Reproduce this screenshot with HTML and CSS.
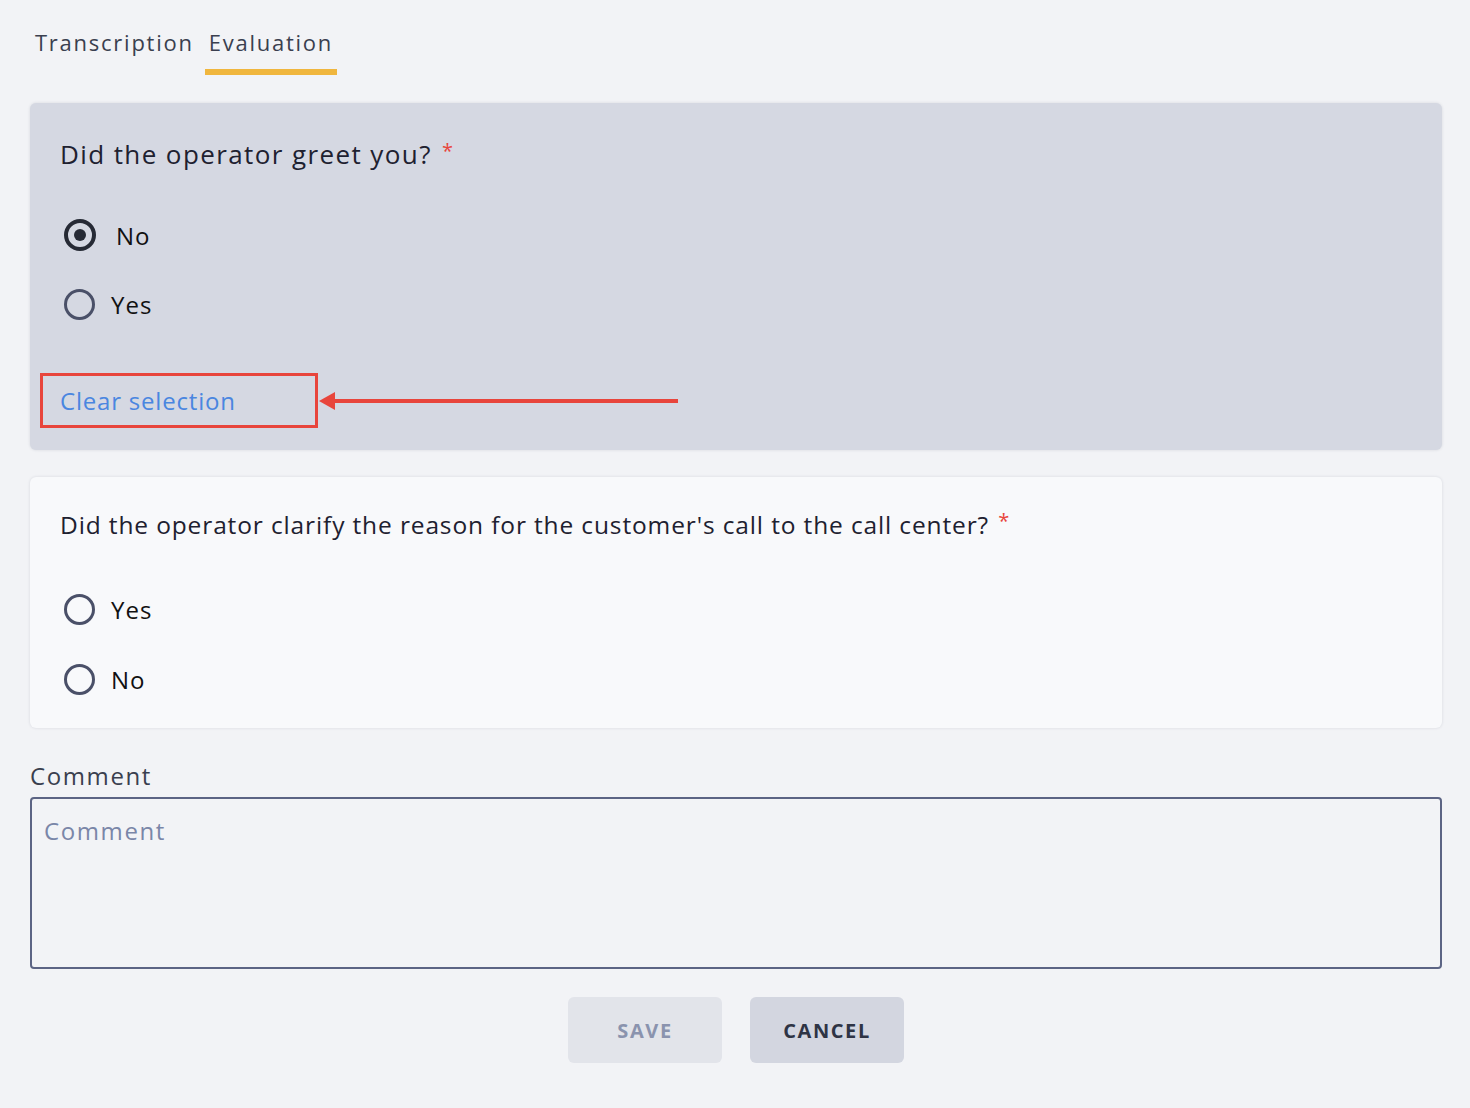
FILE: index.html
```html
<!DOCTYPE html>
<html lang="en">
<head>
    <meta charset="UTF-8">
    <title>Evaluation</title>
    <link rel="stylesheet" href="styles.css">
</head>
<body>
    <div class="page">
        <div class="tabs">
            <div class="tab">Transcription</div>
            <div class="tab active">Evaluation</div>
        </div>

        <div class="card selected">
            <div class="question big">Did the operator greet you? <span class="req">*</span></div>
            <div class="options">
                <label class="option"><span class="radio checked"></span><span class="opt-label gap-wide">No</span></label>
                <label class="option"><span class="radio"></span><span class="opt-label">Yes</span></label>
            </div>
            <div class="clear-row">
                <div class="highlight"><span class="clear-link">Clear selection</span></div>
                <div class="arrow">
                    <svg width="362" height="22" viewBox="0 0 362 22">
                        <path d="M1 11 L17 2 L17 20 Z" fill="#e8453c"/>
                        <line x1="14" y1="11" x2="360" y2="11" stroke="#e8453c" stroke-width="4"/>
                    </svg>
                </div>
            </div>
        </div>

        <div class="card plain">
            <div class="question">Did the operator clarify the reason for the customer's call to the call center? <span class="req">*</span></div>
            <div class="options">
                <label class="option"><span class="radio"></span><span class="opt-label">Yes</span></label>
                <label class="option"><span class="radio"></span><span class="opt-label">No</span></label>
            </div>
        </div>

        <div class="comment">
            <div class="comment-title">Comment</div>
            <div class="textarea">Comment</div>
        </div>

        <div class="actions">
            <button class="btn save">SAVE</button>
            <button class="btn cancel">CANCEL</button>
        </div>
    </div>
</body>
</html>
```

FILE: styles.css
```css
body {
    margin: 0;
    font-family: "Open Sans", Arial, sans-serif;
    background-color: #f2f3f6;
    color: #1e2130;
}
.page {
    padding: 0 28px 0 30px;
}
.tabs {
    display: flex;
    gap: 7px;
    padding-top: 27px;
    margin-left: 1px;
}
.tab {
    font-size: 22px;
    line-height: 30px;
    letter-spacing: 1.75px;
    color: #3a3f4f;
    padding: 0 4px 12px;
    border-bottom: 6px solid transparent;
}
.tab.active {
    border-bottom-color: #f0b63e;
}
.card {
    background-color: #f8f9fb;
    border-radius: 6px;
    box-shadow: 0 0 3px rgba(40, 50, 80, 0.14);
    padding: 0 30px;
}
.card.selected {
    margin-top: 28px;
    background-color: #d5d8e2;
    padding-top: 28px;
    padding-bottom: 22px;
}
.card.plain {
    margin-top: 27px;
    padding-top: 24px;
    padding-bottom: 32px;
}
.question {
    font-size: 24.5px;
    line-height: 40px;
    letter-spacing: 0.87px;
    color: #1e2130;
}
.question.big {
    font-size: 26px;
    letter-spacing: 1.4px;
}
.req {
    color: #e8453c;
    font-size: 20px;
    vertical-align: 6px;
    margin-left: 2px;
}
.options {
    display: flex;
    flex-direction: column;
    gap: 35px;
    margin-top: 44px;
    padding-left: 4px;
}
.card.plain .options {
    margin-top: 47px;
    gap: 36px;
}
.option {
    display: flex;
    align-items: center;
    height: 34px;
}
.radio {
    width: 31px;
    height: 31px;
    border: 3px solid #4a5068;
    border-radius: 50%;
    box-sizing: border-box;
    margin-right: 16px;
    position: relative;
    flex-shrink: 0;
}
.radio.checked {
    width: 32px;
    height: 32px;
    border: 4px solid #262a35;
}
.radio.checked::after {
    content: "";
    position: absolute;
    left: 6px;
    top: 6px;
    width: 12px;
    height: 12px;
    border-radius: 50%;
    background-color: #262a35;
}
.opt-label {
    font-size: 24px;
    letter-spacing: 1px;
    color: #111;
}
.opt-label.gap-wide {
    margin-left: 4px;
}
.clear-row {
    display: flex;
    align-items: center;
    margin-top: 52px;
    margin-left: -20px;
}
.highlight {
    width: 278px;
    height: 55px;
    border: 3px solid #e8453c;
    box-sizing: border-box;
    display: flex;
    align-items: center;
    padding-left: 17px;
}
.clear-link {
    font-size: 24px;
    letter-spacing: 0.8px;
    color: #4a86e0;
}
.arrow {
    display: flex;
}
.arrow svg {
    display: block;
}
.comment {
    margin-top: 33px;
}
.comment-title {
    font-size: 24px;
    letter-spacing: 1.6px;
    color: #3a3f4f;
    line-height: 30px;
}
.textarea {
    margin-top: 6px;
    height: 172px;
    border: 2px solid #5c6484;
    border-radius: 4px;
    box-sizing: border-box;
    padding: 17px 12px;
    font-size: 24px;
    line-height: 30px;
    letter-spacing: 1.6px;
    color: #7a86a8;
}
.actions {
    display: flex;
    justify-content: center;
    gap: 28px;
    margin-top: 28px;
}
.btn {
    width: 154px;
    height: 66px;
    border: none;
    border-radius: 6px;
    font-family: inherit;
    font-size: 20px;
    font-weight: 700;
    letter-spacing: 1.6px;
}
.btn.save {
    background-color: #e2e4ea;
    color: #8a93ae;
}
.btn.cancel {
    background-color: #d3d6e0;
    color: #2e3445;
}
```
